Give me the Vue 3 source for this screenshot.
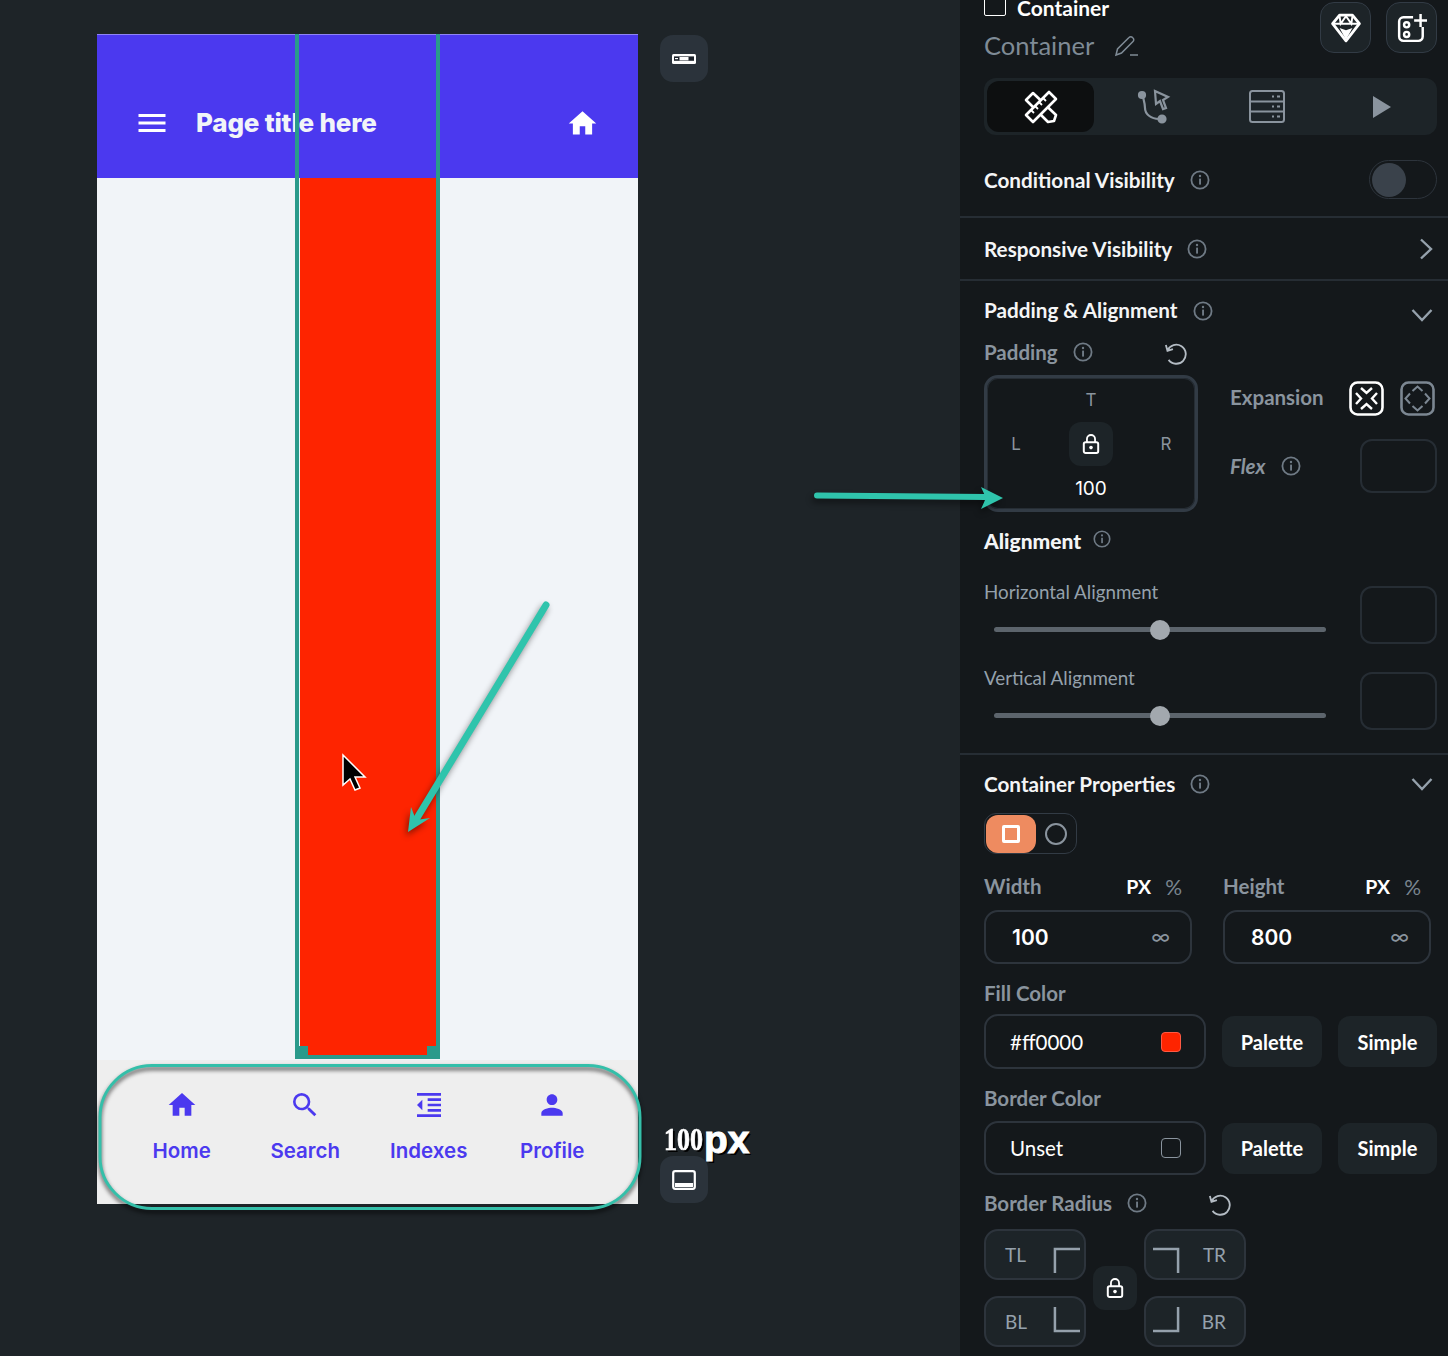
<template>
  <div class="page">
    <svg width="0" height="0" class="defs">
      <symbol id="info" viewBox="0 0 20 20">
        <circle cx="10" cy="10" r="8.600" fill="none" stroke="currentColor" stroke-width="1.800" />
        <rect x="9.100" y="8.600" width="1.900" height="6" fill="currentColor" />
        <circle cx="10" cy="6" r="1.200" fill="currentColor" />
      </symbol>
      <symbol id="lock" viewBox="0 0 20 24">
        <path d="M5.500 10V6.500a4.500 4.500 0 0 1 9 0V10" fill="none" stroke="currentColor" stroke-width="2" />
        <rect x="2" y="10" width="16" height="12" rx="2" fill="none" stroke="currentColor" stroke-width="2.200" />
        <circle cx="10" cy="16" r="2" fill="currentColor" />
      </symbol>
      <symbol id="reset" viewBox="0 0 24 24">
        <path d="M4.500 5.500 6 11l5-1.600M6 10.500a8.800 8.800 0 1 1 1 8.800" fill="none" stroke="currentColor" stroke-width="1.700" />
      </symbol>
    </svg>

    <div class="canvas">
      <div class="phone">
        <header class="app-bar">
          <svg class="menu" viewBox="0 0 24 24"><path d="M3 18h18v-2H3v2zm0-5h18v-2H3v2zm0-7v2h18V6H3z" /></svg>
          <span class="app-title">Page title here</span>
          <svg class="home" viewBox="0 0 24 24"><path d="M10 20v-6h4v6h5v-8h3L12 3 2 12h3v8z" /></svg>
        </header>
        <div class="phone-body">
          <div class="red-col"></div>
        </div>
        <nav class="tabbar">
          <div v-for="item in navItems" :key="item.label" class="tab-item">
            <svg viewBox="0 0 24 24"><path :d="item.d" /></svg>
            <span>{{ item.label }}</span>
          </div>
        </nav>
        <div class="selection">
          <i class="handle left"></i>
          <i class="handle right"></i>
        </div>
      </div>
      <div class="side">
        <button class="side-btn">
          <svg width="26" height="12" viewBox="0 0 26 12">
            <rect x="1" y="1" width="24" height="10" rx="1.500" fill="#fff" />
            <rect x="3" y="3.400" width="20" height="4.400" fill="#1c222a" />
            <rect x="8.500" y="4" width="9" height="3.400" fill="#fff" />
            <rect x="4" y="5" width="3" height="1.200" fill="#fff" />
          </svg>
        </button>
        <button class="side-btn">
          <svg width="24" height="20" viewBox="0 0 24 20">
            <rect x="1.200" y="1.200" width="21.600" height="17.600" rx="2" fill="none" stroke="#fff" stroke-width="2.200" />
            <rect x="3" y="13" width="18" height="4" fill="#fff" />
          </svg>
        </button>
      </div>
      <div class="px-note"><b>100</b><span>px</span></div>
    </div>

    <aside class="panel">
      <div class="panel-head">
        <div class="head-left">
          <div class="kind"><i class="check"></i>Container</div>
          <div class="name">
            Container
            <svg width="26" height="24" viewBox="0 0 26 24" fill="none" stroke="#7f8b96" stroke-width="1.500">
              <path d="M2 22l1.500-6L15 4.500a2.400 2.400 0 0 1 3.500 0l.5.500a2.400 2.400 0 0 1 0 3.500L7.500 20 2 22z" />
              <path d="M16 22h8" />
            </svg>
          </div>
        </div>
        <div class="head-btns">
          <button class="head-btn">
            <svg width="30" height="30" viewBox="0 0 28 28">
              <path d="M8 2h12l6.500 8L14 26 1.500 10 8 2z" fill="none" stroke="#fff" stroke-width="2.600" stroke-linejoin="round" />
              <path d="M2 10h24M8 3l1 7 5-7 5 7 1-7" fill="none" stroke="#fff" stroke-width="1.800" />
              <path d="M8 14l6 11 6-11-6 2z" fill="#fff" />
            </svg>
          </button>
          <button class="head-btn">
            <svg width="30" height="30" viewBox="0 0 28 28" fill="none" stroke="#fff" stroke-width="2.300">
              <path d="M15 4H6a4 4 0 0 0-4 4v14a4 4 0 0 0 4 4h14a4 4 0 0 0 4-4v-9" />
              <circle cx="9" cy="11" r="2.400" />
              <circle cx="9" cy="20" r="2.400" />
              <path d="M22 1v12M16 7h12" />
            </svg>
          </button>
        </div>
      </div>

      <div class="tabs">
        <div class="tab active">
          <svg width="36" height="36" viewBox="0 0 36 36" fill="none" stroke="#fff" stroke-width="2.600" stroke-linejoin="round">
            <path d="M3 11l7-7 23 22-2 6-6 1z" />
            <path d="M3 26L26 3l7 7-23 23-7-7z" fill="#0d0f10" />
            <path d="M8 21l3 3M12 17l3 3M16 13l3 3M20 9l3 3" stroke-width="1.800" />
          </svg>
        </div>
        <div class="tab">
          <svg width="34" height="36" viewBox="0 0 34 36" fill="none" stroke="#8a949e" stroke-width="2.200">
            <circle cx="5" cy="6" r="3" fill="#8a949e" />
            <circle cx="25" cy="30" r="3.500" fill="#8a949e" />
            <path d="M6 8c1 4 2 7 2 11 0 6 6 11 14 11" />
            <path d="M18 2l13 6-5 3 3 8-3 1-3-8-4 3z" />
          </svg>
        </div>
        <div class="tab">
          <svg width="36" height="33" viewBox="0 0 36 33" fill="none" stroke="#8a949e" stroke-width="2">
            <rect x="1" y="1" width="34" height="31" rx="2.500" />
            <path d="M1 11.500h34M1 21.500h34" />
            <path d="M23 6.500h2M28 6.500h3M23 16.500h2M28 16.500h3M23 26.500h2M28 26.500h3" />
          </svg>
        </div>
        <div class="tab play">
          <svg width="18" height="22" viewBox="0 0 18 22"><path d="M0 0l18 11L0 22z" fill="#8a949e" /></svg>
        </div>
      </div>

      <div class="row vis-row">
        <span class="title">Conditional Visibility</span>
        <svg class="info"><use href="#info" /></svg>
        <span class="toggle"><i></i></span>
      </div>
      <div class="row resp-row">
        <span class="title">Responsive Visibility</span>
        <svg class="info"><use href="#info" /></svg>
        <svg class="chev right" width="14" height="22" viewBox="0 0 14 22" fill="none" stroke="#95a1ac" stroke-width="2.400"><path d="M2 1.500 12 11 2 20.500" /></svg>
      </div>

      <section class="padding-sec">
        <div class="sec-head">
          <span class="title">Padding &amp; Alignment</span>
          <svg class="info"><use href="#info" /></svg>
          <svg class="chev down" width="22" height="14" viewBox="0 0 22 14" fill="none" stroke="#95a1ac" stroke-width="2.400"><path d="M1.500 2 11 12l9.500-10" /></svg>
        </div>
        <div class="label-row">
          <span class="label">Padding</span>
          <svg class="info"><use href="#info" /></svg>
          <svg class="reset pad-reset"><use href="#reset" /></svg>
        </div>
        <div class="pad-wrap">
          <div class="pad-box">
            <span class="pad-t">T</span>
            <div class="pad-mid">
              <span class="pad-t">L</span>
              <span class="lock-btn"><svg class="lock"><use href="#lock" /></svg></span>
              <span class="pad-t">R</span>
            </div>
            <span class="pad-val">100</span>
          </div>
          <div class="pad-right">
            <div class="expansion">
              <span class="label">Expansion</span>
              <span class="exp-icons">
                <svg width="35" height="35" viewBox="0 0 35 35" fill="none" stroke="#fff">
                  <rect x="1.500" y="1.500" width="32" height="32" rx="7" stroke-width="2.600" />
                  <path d="M12 7l5.500 5L23 7M12 28l5.500-5 5.500 5M7 12l5 5.500L7 23M28 12l-5 5.500 5 5.500" stroke-width="2.400" />
                </svg>
                <svg width="35" height="35" viewBox="0 0 35 35" fill="none" stroke="#7c8792">
                  <rect x="1.500" y="1.500" width="32" height="32" rx="7" stroke-width="2.600" />
                  <path d="M12.500 10l5-4.500 5 4.500M12.500 25l5 4.500 5-4.500M10 12.500l-4.500 5 4.500 5M25 12.500l4.500 5-4.500 5" stroke-width="2" />
                </svg>
              </span>
            </div>
            <div class="flex-row">
              <span class="label flex-label">Flex</span>
              <svg class="info"><use href="#info" /></svg>
              <span class="small-box"></span>
            </div>
          </div>
        </div>
        <div class="align-head">
          <span class="title strong">Alignment</span>
          <svg class="info small"><use href="#info" /></svg>
        </div>
        <div v-for="name in alignRows" :key="name" class="align-row">
          <div class="align-left">
            <span class="label">{{ name }}</span>
            <div class="slider"><i></i></div>
          </div>
          <span class="small-box tall"></span>
        </div>
      </section>

      <section class="props-sec">
        <div class="sec-head">
          <span class="title">Container Properties</span>
          <svg class="info"><use href="#info" /></svg>
          <svg class="chev" width="22" height="14" viewBox="0 0 22 14" fill="none" stroke="#95a1ac" stroke-width="2.400"><path d="M1.500 2 11 12l9.500-10" /></svg>
        </div>
        <div class="seg">
          <span class="seg-on"><i></i></span>
          <span class="seg-off"><i></i></span>
        </div>
        <div class="size-grid">
          <div v-for="field in sizes" :key="field.name" class="size-col">
            <div class="size-labels">
              <span class="label">{{ field.name }}</span>
              <span class="unit on">PX</span>
              <span class="unit">%</span>
            </div>
            <div class="size-input">
              <span>{{ field.value }}</span>
              <em>∞</em>
            </div>
          </div>
        </div>

        <span class="label block">Fill Color</span>
        <div class="color-row fill-row">
          <div class="color-input fill">
            <span>#ff0000</span>
            <i class="swatch red"></i>
          </div>
          <button class="flat-btn">Palette</button>
          <button class="flat-btn simple">Simple</button>
        </div>

        <span class="label block">Border Color</span>
        <div class="color-row border-row">
          <div class="color-input">
            <span>Unset</span>
            <i class="swatch"></i>
          </div>
          <button class="flat-btn">Palette</button>
          <button class="flat-btn simple">Simple</button>
        </div>

        <div class="label-row radius-label">
          <span class="label">Border Radius</span>
          <svg class="info"><use href="#info" /></svg>
          <svg class="reset rad-reset"><use href="#reset" /></svg>
        </div>
        <div class="radius-grid">
          <div class="radius-col">
            <div class="corner">
              <span>TL</span>
              <svg class="top" width="27" height="27" viewBox="0 0 28 28" fill="none" stroke="#95a1ac" stroke-width="2.600"><path d="M2 27V2h26" /></svg>
            </div>
            <div class="corner">
              <span>BL</span>
              <svg class="bottom" width="27" height="27" viewBox="0 0 28 28" fill="none" stroke="#95a1ac" stroke-width="2.600"><path d="M2 1v25h26" /></svg>
            </div>
          </div>
          <span class="lock-btn"><svg class="lock"><use href="#lock" /></svg></span>
          <div class="radius-col">
            <div class="corner flip">
              <svg class="top" width="27" height="27" viewBox="0 0 28 28" fill="none" stroke="#95a1ac" stroke-width="2.600"><path d="M0 2h26v25" /></svg>
              <span>TR</span>
            </div>
            <div class="corner flip">
              <svg class="bottom" width="27" height="27" viewBox="0 0 28 28" fill="none" stroke="#95a1ac" stroke-width="2.600"><path d="M0 26h26V1" /></svg>
              <span>BR</span>
            </div>
          </div>
        </div>
      </section>
    </aside>

    <!-- hand drawn annotations sit on top of everything -->
    <svg class="notes" width="1448" height="1356" viewBox="0 0 1448 1356">
      <rect class="ring" x="100" y="1065.500" width="540" height="143" rx="52" />
      <g class="arrow">
        <path d="M546 605 414 823" fill="none" stroke="#2fc4ac" stroke-width="7" stroke-linecap="round" />
        <path d="M408 832l3-25 5 13 14-2z" fill="#2fc4ac" />
      </g>
      <g class="arrow">
        <path d="M817 495.500 986 497" fill="none" stroke="#2fc4ac" stroke-width="6" stroke-linecap="round" />
        <path d="M1003 498 981 487l5 11-5 11z" fill="#2fc4ac" />
      </g>
      <path d="M343 755v30l7-6 5 11 5-2-5-11h10z" fill="#000" stroke="#fff" stroke-width="1.500" />
    </svg>
  </div>
</template>

<script setup>
const navItems = [
  { label: 'Home', d: 'M10 20v-6h4v6h5v-8h3L12 3 2 12h3v8z' },
  { label: 'Search', d: 'M15.500 14h-.79l-.28-.27A6.470 6.470 0 0 0 16 9.500 6.500 6.500 0 1 0 9.500 16c1.610 0 3.090-.59 4.230-1.570l.27.28v.79l5 4.990L20.490 19l-4.990-5zm-6 0C7.010 14 5 11.990 5 9.500S7.010 5 9.500 5 14 7.010 14 9.500 11.990 14 9.500 14z' },
  { label: 'Indexes', d: 'M11 17h10v-2H11v2zm-8-5l4 4V8l-4 4zm0 9h18v-2H3v2zM3 3v2h18V3H3zm8 6h10V7H11v2zm0 4h10v-2H11v2z' },
  { label: 'Profile', d: 'M12 12c2.210 0 4-1.790 4-4s-1.790-4-4-4-4 1.790-4 4 1.790 4 4 4zm0 2c-2.670 0-8 1.340-8 4v2h16v-2c0-2.660-5.330-4-8-4z' }
];

const alignRows = ['Horizontal Alignment', 'Vertical Alignment'];

const sizes = [
  { name: 'Width', value: '100' },
  { name: 'Height', value: '800' }
];
</script>

<style>
body {
  margin: 0;
  background: #1e2428;
}
</style>

<style scoped>
.page {
  position: relative;
  display: flex;
  width: 1448px;
  height: 1356px;
  overflow: hidden;
  background: #1e2428;
  font-family: "Lato", "Open Sans", sans-serif;
  color: #fff;
}

.defs {
  position: absolute;
}

.canvas {
  position: relative;
  display: flex;
  gap: 23px;
  width: 960px;
  padding: 34px 0 0 97px;
  box-sizing: border-box;
}

.phone {
  position: relative;
  display: flex;
  flex-direction: column;
  width: 541px;
  height: 1170px;
  font-family: "Inter", sans-serif;
  background: #f1f4f8;
}

.app-bar {
  display: flex;
  align-items: center;
  height: 144px;
  padding: 32px 0 0 37px;
  box-sizing: border-box;
  background: #4b39ef;
  border-top: 1px solid #8f84f5;
  flex: none;
}

.menu {
  width: 36px;
  height: 36px;
  fill: #fff;
}

.app-title {
  margin-left: 26px;
  font-size: 26px;
  font-weight: 800;
  letter-spacing: -0.2px;
  color: #f1f4f8;
}

.home {
  width: 33px;
  height: 33px;
  margin: 1px 39px 0 auto;
  fill: #fff;
}

.phone-body {
  display: flex;
  justify-content: center;
  flex: 1;
  padding: 0 0 4px 1px;
}

.red-col {
  width: 136px;
  background: #fe2400;
}

.tabbar {
  display: flex;
  height: 144px;
  flex: none;
  padding: 29px 0 0 23px;
  box-sizing: border-box;
  background: #eeeeee;
}

.tab-item {
  display: flex;
  flex-direction: column;
  align-items: center;
  width: 123.500px;
  gap: 17px;
  color: #4b39ef;
  font-size: 20.500px;
  font-weight: 600;
}

.tab-item svg {
  width: 32px;
  height: 32px;
  fill: #4b39ef;
}

.selection {
  position: absolute;
  left: 198px;
  top: 0;
  width: 145px;
  height: 1025px;
  box-sizing: border-box;
  border: 4px solid #2a9a8b;
  border-top: 0;
}

.handle {
  position: absolute;
  bottom: -1px;
  width: 10px;
  height: 10px;
  background: #2a9a8b;
}

.handle.left {
  left: -1px;
}

.handle.right {
  right: -1px;
}

.side {
  display: flex;
  flex-direction: column;
  justify-content: space-between;
  height: 1168px;
  padding-top: 1px;
  margin-left: -1px;
}

.side-btn {
  display: flex;
  align-items: center;
  justify-content: center;
  width: 48px;
  height: 47px;
  padding: 0;
  border: 0;
  border-radius: 13px;
  background: #2b333b;
}

.px-note {
  position: absolute;
  left: 664px;
  top: 1115px;
  display: flex;
  align-items: baseline;
  font-family: "Liberation Sans", sans-serif;
  font-weight: 700;
  text-shadow: 2px 2px 0 #000;
  line-height: 50px;
}

.px-note b {
  display: inline-block;
  font-family: "Liberation Serif", serif;
  font-size: 26px;
  transform: scaleY(1.200);
  transform-origin: bottom;
  -webkit-text-stroke: 0.600px #fff;
}

.px-note span {
  font-size: 39px;
  margin-left: 1px;
  -webkit-text-stroke: 1px #fff;
}

.panel {
  width: 488px;
  height: 1356px;
  padding: 0 11px 0 24px;
  box-sizing: border-box;
  background: #14181b;
  font-size: 20px;
}

.panel-head {
  display: flex;
  justify-content: space-between;
  height: 78px;
}

.kind {
  display: flex;
  align-items: center;
  gap: 11px;
  height: 15px;
  font-weight: 700;
  font-size: 21px;
  line-height: 15px;
}

.check {
  width: 20px;
  height: 20px;
  margin-top: -5px;
  border: 1px solid #fff;
  border-radius: 2px;
}

.name {
  display: flex;
  align-items: center;
  gap: 20px;
  margin-top: 15px;
  font-size: 25.500px;
  line-height: 30px;
  color: #7f8b96;
}

.head-btns {
  display: flex;
  gap: 15px;
  padding-top: 2px;
}

.head-btn {
  display: flex;
  align-items: center;
  justify-content: center;
  width: 51px;
  height: 51px;
  padding: 0;
  border: 1px solid #323b45;
  border-radius: 14px;
  background: #1d2428;
}

.tabs {
  display: flex;
  gap: 6px;
  height: 57px;
  padding: 3px;
  box-sizing: border-box;
  border-radius: 12px;
  background: #1d2428;
}

.tab {
  display: flex;
  align-items: center;
  justify-content: center;
  width: 107px;
  height: 51px;
  border-radius: 12px;
}

.tab.active {
  background: #0d0f10;
}

.tab.play svg {
  margin-left: 5px;
}

.row,
.sec-head,
.label-row,
.align-head,
.flex-row {
  display: flex;
  align-items: center;
}

.vis-row {
  height: 83px;
  margin: 0 -11px 0 -24px;
  padding: 8px 11px 0 24px;
  box-sizing: border-box;
  border-bottom: 2px solid #262d34;
}

.resp-row {
  height: 63px;
  box-sizing: border-box;
  margin: 0 -11px 0 -24px;
  padding: 0 11px 0 24px;
  border-bottom: 2px solid #262d34;
}

.title {
  font-weight: 700;
  font-size: 20.700px;
  color: #f4f5f6;
}

.label {
  font-size: 20.500px;
  font-weight: 700;
  color: #8a949e;
}

.info {
  width: 20px;
  height: 20px;
  margin-left: 15px;
  color: #6f7a85;
}

.info.small {
  width: 18px;
  height: 18px;
  margin-top: -4px;
  margin-left: 12px;
}

.toggle {
  display: block;
  width: 68px;
  height: 39px;
  margin-left: auto;
  padding: 2px;
  box-sizing: border-box;
  border: 1px solid #2d343c;
  border-radius: 20px;
}

.toggle i {
  display: block;
  width: 34px;
  height: 34px;
  border-radius: 50%;
  background: #3a424b;
}

.chev {
  margin-left: auto;
  margin-right: 4px;
  flex: none;
}

.chev.right {
  margin-right: 4px;
}

.chev.down {
  margin-top: 8px;
}

.sec-head {
  height: 59px;
}

.padding-sec .sec-head .title {
  margin-top: -1px;
}

.props-sec .sec-head {
  height: 58px;
}

.label-row {
  height: 24px;
}

.reset {
  width: 26px;
  height: 26px;
  color: #b4bcc4;
}

.pad-reset {
  margin-left: 68px;
}

.pad-wrap {
  display: flex;
  gap: 32px;
  margin-top: 11px;
}

.pad-box {
  display: flex;
  flex-direction: column;
  align-items: center;
  gap: 11px;
  width: 214px;
  height: 137px;
  padding-top: 11px;
  box-sizing: border-box;
  border: 3px solid #323b45;
  border-radius: 14px;
  box-shadow: inset 0 0 0 1px #262d34;
  font-size: 19px;
}

.pad-t {
  width: 20px;
  line-height: 22px;
  text-align: center;
  color: #8a949e;
  font-family: "Inter", sans-serif;
  font-size: 17px;
}

.pad-mid {
  display: flex;
  align-items: center;
  gap: 43px;
}

.lock-btn {
  display: flex;
  align-items: center;
  justify-content: center;
  width: 44px;
  height: 44px;
  border-radius: 12px;
  background: #1d2428;
}

.lock {
  width: 18px;
  height: 22px;
}

.pad-val {
  line-height: 22px;
  margin-top: 1px;
  font-family: "Inter", sans-serif;
  font-size: 19px;
}

.pad-right {
  flex: 1;
}

.expansion {
  display: flex;
  align-items: center;
  height: 35px;
  margin-top: 6px;
  padding-right: 2px;
}

.expansion .label {
  margin-top: -4px;
}

.exp-icons {
  display: flex;
  gap: 16px;
  margin-left: auto;
}

.flex-row {
  height: 54px;
  margin-top: 23px;
}

.flex-label {
  font-style: italic;
}

.small-box {
  display: block;
  width: 77px;
  height: 54px;
  margin-left: auto;
  box-sizing: border-box;
  border: 2px solid #262d34;
  border-radius: 12px;
}

.small-box.tall {
  height: 58px;
  flex: none;
}

.align-head {
  height: 24px;
  margin-top: 17px;
  margin-bottom: 33px;
}

.strong {
  margin-top: -2px;
  font-weight: 900;
  font-size: 21px;
}

.align-row {
  display: flex;
  height: 58px;
  margin-bottom: 28px;
}

.align-row:last-child {
  margin-bottom: 23px;
}

.align-left {
  display: flex;
  flex-direction: column;
  flex: 1;
  margin-top: -5px;
}

.align-left .label {
  line-height: 22px;
  font-size: 18.800px;
  font-weight: 400;
  color: #95a1ac;
}

.slider {
  position: relative;
  width: 332px;
  height: 5px;
  margin: 24px 0 0 10px;
  border-radius: 3px;
  background: #5c646c;
}

.slider i {
  position: absolute;
  left: 156px;
  top: -7.500px;
  width: 20px;
  height: 20px;
  border-radius: 50%;
  background: #a2a8ae;
}

.padding-sec {
  position: relative;
}

.props-sec {
  margin: 0 -11px 0 -24px;
  padding: 0 11px 0 24px;
  border-top: 2px solid #262d34;
}

.seg {
  display: flex;
  align-items: center;
  width: 93px;
  height: 41px;
  padding: 1px;
  box-sizing: border-box;
  border: 1px solid #323b45;
  border-radius: 12px;
}

.seg-on {
  display: flex;
  align-items: center;
  justify-content: center;
  width: 50px;
  height: 38px;
  border-radius: 12px;
  background: #ee8b60;
}

.seg-on i {
  width: 12px;
  height: 12px;
  border: 3px solid #fff;
  border-radius: 2px;
}

.seg-off {
  display: flex;
  justify-content: center;
  flex: 1;
}

.seg-off i {
  width: 18px;
  height: 18px;
  border: 2px solid #8a949e;
  border-radius: 50%;
}

.size-grid {
  display: flex;
  gap: 31px;
  margin-top: 20px;
}

.size-col {
  width: 208px;
}

.size-labels {
  display: flex;
  align-items: center;
  height: 24px;
  padding-right: 10px;
}

.unit {
  margin-left: 14px;
  color: #7a858f;
  font-size: 21px;
}

.unit.on {
  margin-left: auto;
  color: #fff;
  font-size: 19.500px;
  font-weight: 700;
}

.size-input {
  display: flex;
  align-items: center;
  justify-content: space-between;
  height: 54px;
  margin-top: 12px;
  padding: 0 20px 0 26px;
  box-sizing: border-box;
  border: 2px solid #2d343c;
  border-radius: 14px;
  font-family: "Inter", sans-serif;
  font-size: 21px;
  font-weight: 600;
}

.size-input em {
  font-style: normal;
  color: #8a949e;
  font-size: 20px;
  font-weight: 400;
}

.label.block {
  display: block;
  margin-top: 17px;
  line-height: 24px;
}

.color-row {
  display: flex;
  align-items: center;
  gap: 16px;
}

.fill-row {
  margin-top: 9px;
}

.border-row {
  margin-top: 11px;
}

.color-input {
  display: flex;
  align-items: center;
  justify-content: space-between;
  width: 222px;
  height: 54px;
  padding: 0 23px 0 24px;
  box-sizing: border-box;
  border: 2px solid #2d343c;
  border-radius: 14px;
  font-size: 20.500px;
}

.color-input.fill {
  height: 55px;
}

.swatch {
  width: 18px;
  height: 18px;
  border: 1px solid #8a949e;
  border-radius: 4px;
}

.swatch.red {
  border-color: #fe5a44;
  background: #fe2400;
}

.flat-btn {
  width: 100px;
  height: 51px;
  padding: 0;
  border: 0;
  border-radius: 12px;
  background: #1d2428;
  color: #fff;
  font-family: inherit;
  font-size: 20px;
  font-weight: 700;
}

.flat-btn.simple {
  width: 99px;
}

.radius-label {
  margin-top: 16px;
}

.rad-reset {
  margin-left: 58px;
}

.radius-grid {
  display: flex;
  align-items: center;
  gap: 7px;
  margin-top: 14px;
}

.radius-col {
  display: flex;
  flex-direction: column;
  gap: 16px;
}

.corner {
  display: flex;
  align-items: center;
  justify-content: space-between;
  width: 102px;
  height: 51px;
  padding: 0 4px 0 19px;
  box-sizing: border-box;
  border: 2px solid #2d343c;
  border-radius: 14px;
  background: #1d2428;
  color: #95a1ac;
  font-size: 19px;
}

.corner.flip {
  padding: 0 18px 0 7px;
}

.corner svg.top {
  margin-top: 12px;
}

.corner svg.bottom {
  margin-top: -5px;
}

.notes {
  position: absolute;
  left: 0;
  top: 0;
  pointer-events: none;
}

.ring {
  fill: none;
  stroke: #34bfa9;
  stroke-width: 3;
  filter: drop-shadow(0 3px 2px rgba(0, 0, 0, 0.7));
}

.arrow {
  filter: drop-shadow(-2px 4px 3px rgba(0, 0, 0, 0.45));
}
</style>
